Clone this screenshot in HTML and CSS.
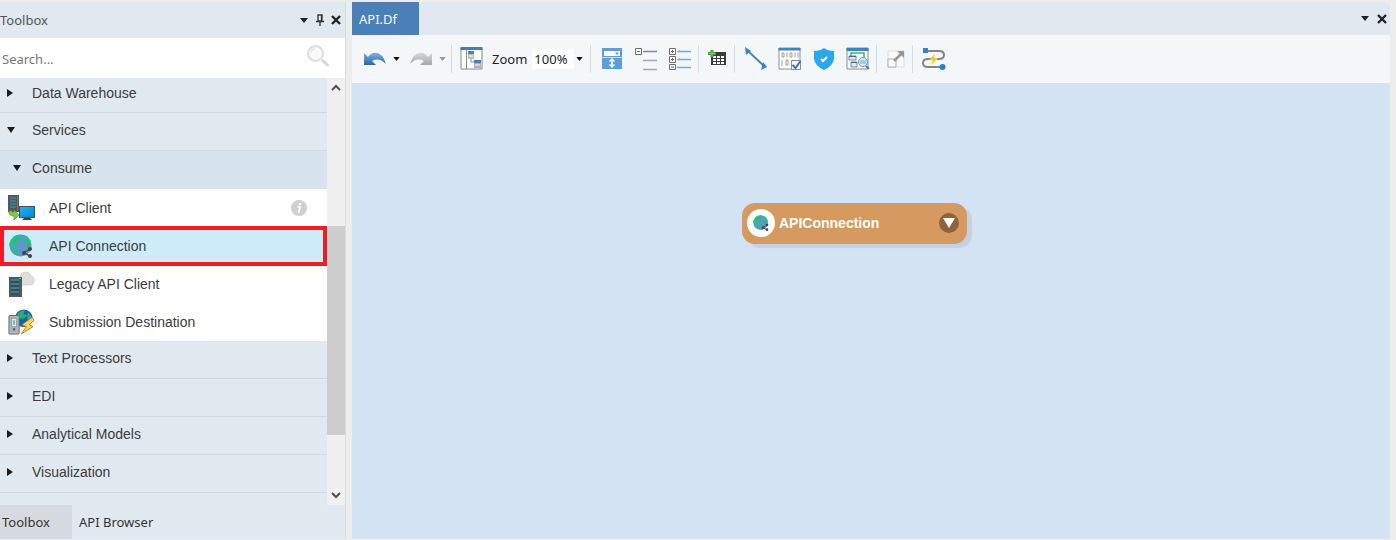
FILE: index.html
```html
<!DOCTYPE html>
<html lang="en">
<head>
<meta charset="utf-8">
<title>API.Df</title>
<link rel="stylesheet" href="styles.css">
</head>
<body>
<svg class="defs" aria-hidden="true">
  <defs>
    <linearGradient id="blueArrow" x1="0" y1="0" x2="0" y2="1"><stop offset="0" stop-color="#7fb0dc"/><stop offset="1" stop-color="#2565ae"/></linearGradient>
    <linearGradient id="greyArrow" x1="0" y1="0" x2="0" y2="1"><stop offset="0" stop-color="#d4d6d8"/><stop offset="1" stop-color="#a5a8ab"/></linearGradient>
    <linearGradient id="screen" x1="0" y1="0" x2="1" y2="1"><stop offset="0" stop-color="#19b4ee"/><stop offset="1" stop-color="#0b86d2"/></linearGradient>
  </defs>
  <symbol id="down" viewBox="0 0 8 5"><path d="M0 0h8L4 5z"/></symbol>
  <symbol id="cross" viewBox="0 0 10 10"><path d="M1 1l8 8M9 1l-8 8" fill="none" stroke="#222" stroke-width="2.4"/></symbol>
  <symbol id="globe" viewBox="0 0 24 24">
    <circle cx="11.500" cy="11.500" r="11" fill="#6097ca"/>
    <path d="M1 8C3 3 7 0 12 1l-2 3 2 1-2 3-3 1-2 3 3 2 1 3-1 4-3-2-1-5-4-3zM15 1l4 2 3 5-1 4-2-3-2 0-1-3 1-2z" fill="#1fc487"/>
    <path d="M4 6l4-3 1 2-4 3zM18 9l3 1-1 3-3-1z" fill="#45a877"/>
    <path d="M21 15l-6 4 6 3" fill="none" stroke="#555" stroke-width="1.500"/>
    <circle cx="21" cy="15" r="2" fill="#454545"/><circle cx="15" cy="19" r="2" fill="#454545"/><circle cx="21" cy="22" r="2" fill="#454545"/>
  </symbol>
</svg>

<div class="app">
  <aside class="panel">
    <header class="panel-head">
      <h2 class="panel-title">Toolbox</h2>
      <button class="plain" aria-label="Options"><svg class="caret" aria-hidden="true"><use href="#down"/></svg></button>
      <button class="plain" aria-label="Pin"><svg width="10" height="12" viewBox="0 0 10 12"><path d="M3 1h4v6H3zM1 7.500h8M5 8v4M6.500 1v6" fill="none" stroke="#333" stroke-width="1.300"/></svg></button>
      <button class="plain" aria-label="Close toolbox"><svg class="cross" aria-hidden="true"><use href="#cross"/></svg></button>
    </header>
    <div class="search">
      <input class="search-input" type="text" placeholder="Search..." aria-label="Search">
      <svg class="search-icon" viewBox="0 0 24 24" aria-hidden="true"><circle cx="9.500" cy="9.500" r="7.500" fill="#fafafa" stroke="#dedede" stroke-width="2"/><path d="M5 9q0-4 4-4" fill="none" stroke="#e8e8e8" stroke-width="1.500"/><path d="M15.500 15.500l2 2" stroke="#dedede" stroke-width="2"/><path d="M17 17l4.500 4" stroke="#d6d6d6" stroke-width="3" stroke-linecap="round"/></svg>
    </div>
    <div class="tree">
      <div class="tree-list">
        <button class="group first"><span class="mark right"></span>Data Warehouse</button>
        <button class="group"><span class="mark open"></span>Services</button>
        <button class="group sub"><span class="mark open deep"></span>Consume</button>
        <button class="item">
          <svg class="item-icon" viewBox="0 0 28 26" aria-hidden="true"><path d="M1 0h11v17H1z" fill="#53575b"/><path d="M3 3h6M3 6h6M3 9h6M3 12h6" stroke="#369ec5" stroke-width="1.200"/><path d="M10 1h1v15h-1z" fill="#777"/><path d="M12 11h16v12H12z" fill="#4a5259"/><path d="M13 12h14v10H13z" fill="url(#screen)"/><path d="M17 23h6l2 2H15z" fill="#374148"/><path d="M2 16q-1 5 5 5v4l5-5-5-5v3q-2 0-2-2z" fill="#83cc3a" stroke="#57982b" stroke-width=".7"/></svg>
          <span class="item-label">API Client</span>
          <svg class="info" viewBox="0 0 16 16" aria-hidden="true"><circle cx="8" cy="8" r="8" fill="#d0d0d0"/><circle cx="9" cy="4" r="1.300" fill="#fff"/><path d="M6.500 7H9l-1.200 5h1" fill="none" stroke="#fff" stroke-width="1.600"/></svg>
        </button>
        <button class="item selected">
          <svg class="item-icon" viewBox="-2 -1 28 26" aria-hidden="true"><use href="#globe" width="24" height="24"/></svg>
          <span class="item-label">API Connection</span>
        </button>
        <button class="item">
          <svg class="item-icon" viewBox="0 0 28 26" aria-hidden="true"><path d="M11 14q-2-4 2-6 0-7 6-7 4 0 5 4 4 1 3 6-1 3-4 3z" fill="#dedede" stroke="#c8c8c8" stroke-width=".7"/><path d="M2 6h13v20H2z" fill="#4d5960"/><path d="M4 9h8M4 13h8M4 17h8M4 21h8" stroke="#358ca8" stroke-width="1.500"/><path d="M4 11h8M4 15h8M4 19h8M4 23h8" stroke="#2f3b42"/><path d="M12 7h2v1h-2z" fill="#7ed321"/></svg>
          <span class="item-label">Legacy API Client</span>
        </button>
        <button class="item">
          <svg class="item-icon" viewBox="0 0 28 28" aria-hidden="true"><circle cx="17" cy="10" r="9.500" fill="#1662a9"/><path d="M10 5q4-4 8-4l-1 4 4 2-3 3-4 1-3-2z" fill="#27ad78"/><path d="M21 3l4 5-1 6-3-2z" fill="#35b27b"/><rect x="1" y="7" width="11" height="20" rx="1" fill="#aeb6bc" stroke="#626a70"/><path d="M4 10h5v9H4z" fill="#eef2f5" stroke="#727c83" stroke-width=".7"/><path d="M6.500 12v5" stroke="#23a0ce" stroke-width="1.500"/><circle cx="6.500" cy="22" r="1.500" fill="#626a70"/><path d="M26 9l-11 8 5 2-6 8 13-8-4-2 5-5z" fill="#ffd85a" stroke="#bd7819"/></svg>
          <span class="item-label">Submission Destination</span>
        </button>
        <button class="group"><span class="mark right"></span>Text Processors</button>
        <button class="group"><span class="mark right"></span>EDI</button>
        <button class="group"><span class="mark right"></span>Analytical Models</button>
        <button class="group"><span class="mark right"></span>Visualization</button>
      </div>
      <div class="scroll">
        <button class="scroll-btn" aria-label="Scroll up"><svg width="10" height="8" viewBox="0 0 10 8"><path d="M1 6l4-4 4 4" fill="none" stroke="#505050" stroke-width="2"/></svg></button>
        <div class="track"><div class="thumb"></div></div>
        <button class="scroll-btn" aria-label="Scroll down"><svg width="10" height="8" viewBox="0 0 10 8"><path d="M1 2l4 4 4-4" fill="none" stroke="#505050" stroke-width="2"/></svg></button>
      </div>
    </div>
    <nav class="panel-tabs">
      <button class="panel-tab active">Toolbox</button>
      <button class="panel-tab">API Browser</button>
    </nav>
  </aside>

  <main class="document">
    <header class="doc-tabs">
      <button class="doc-tab">API.Df</button>
      <span class="spacer"></span>
      <button class="plain" aria-label="Document list"><svg class="caret" aria-hidden="true"><use href="#down"/></svg></button>
      <button class="plain" aria-label="Close document"><svg class="cross" aria-hidden="true"><use href="#cross"/></svg></button>
    </header>
    <div class="toolbar">
      <button class="tool" aria-label="Undo"><svg viewBox="0 0 24 24"><path d="M1 6v12h12l-4-4q7-4 14 3Q19 4 10 6 7 7 5 10z" fill="url(#blueArrow)"/></svg></button>
      <button class="drop" aria-label="Undo history"><svg class="small-caret"><use href="#down"/></svg></button>
      <button class="tool redo" aria-label="Redo"><svg viewBox="0 0 24 24"><path d="M23 6v12H11l4-4q-7-4-14 3Q5 4 14 6q3 1 5 4z" fill="url(#greyArrow)"/></svg></button>
      <button class="drop muted" aria-label="Redo history"><svg class="small-caret"><use href="#down"/></svg></button>
      <span class="sep short"></span>
      <button class="tool" aria-label="Overview"><svg viewBox="0 0 24 24"><path d="M1 1h21v21H1z" fill="#fff" stroke="#858b90"/><path d="M.5 0h22v3H.5z" fill="#3f7ec0"/><path d="M6.500 3v19" stroke="#858b90"/><path d="M8 4h6v8H8z" fill="#b8bec5"/><path d="M8 4h6v3H8zM14 13h7v3h-7z" fill="#4381c1"/><path d="M14 16h7v5h-7z" fill="#abb2b9"/><path d="M9 9h4M15 18h5" stroke="#fff"/><path d="M11 12v3h3" fill="none" stroke="#8a9095"/></svg></button>
      <label class="zoom-label" for="zoom">Zoom</label>
      <select class="zoom-select" id="zoom"><option>100%</option></select>
      <svg class="small-caret zoom-caret" aria-hidden="true"><use href="#down"/></svg>
      <span class="sep"></span>
      <div class="tools">
        <button class="tool" aria-label="Expand objects"><svg viewBox="0 0 24 24"><path d="M2 1h20v21H2z" fill="#5e9dd5"/><path d="M4 4h16v5H4z" fill="#fff"/><path d="M15 5.500h4L17 8z" fill="#5e9dd5"/><path d="M2 10.500h20" stroke="#c8e0f5"/><path d="M12 12v8M9.500 14.500L12 12l2.500 2.500M9.500 17.500L12 20l2.500-2.500" fill="none" stroke="#fff" stroke-width="1.500"/></svg></button>
        <button class="tool" aria-label="Collapse nodes"><svg viewBox="0 0 24 24"><path d="M1.500 1.500h6v6h-6zM3 4.500h3" fill="#fff" stroke="#6d6d6d"/><path d="M9 4.500h14" stroke="#5796d4" stroke-width="1.500"/><path d="M9 13.500h14M9 22.500h14" stroke="#a7aaad" stroke-width="1.300"/></svg></button>
        <button class="tool" aria-label="Expand nodes"><svg viewBox="0 0 24 24"><path d="M1.500 1.500h6v6h-6zM1.500 9.500h6v6h-6zM1.500 17.500h6v5h-6zM3 4.500h3M4.500 3v3M3 12.500h3M4.500 11v3M3 20h3" fill="#fff" stroke="#6d6d6d"/><path d="M9 4.500h14M9 12.500h14M9 20.500h14" stroke="#76a9d9" stroke-width="1.500"/></svg></button>
      </div>
      <span class="sep"></span>
      <button class="tool narrow" aria-label="Add grid"><svg viewBox="0 0 20 24"><path d="M3 5h15v13H3z" fill="#3c3c3c"/><path d="M5 9h3v2H5zM9 9h3v2H9zM13 9h3v2h-3zM5 12h3v2H5zM9 12h3v2H9zM13 12h3v2h-3zM5 15h3v2H5zM9 15h3v2H9zM13 15h3v2h-3z" fill="#fff"/><path d="M4 3v7M0 6.500h8" stroke="#459b38" stroke-width="3"/><path d="M4 4v5M1 6.500h6" stroke="#82cf68"/></svg></button>
      <span class="sep"></span>
      <div class="tools">
        <button class="tool" aria-label="Link"><svg viewBox="0 0 24 24"><path d="M4 4l16 15" stroke="#457db5" stroke-width="1.800"/><path d="M1 0l6 4-5 4zM23 20l-6 3 2-8z" fill="#3f80c4"/></svg></button>
        <button class="tool" aria-label="Verify data"><svg viewBox="0 0 24 24"><path d="M1 1h21v21H1z" fill="#fff" stroke="#8b8e91"/><path d="M.5 1h22v2.500H.5z" fill="#4380c0"/><path d="M4 6h2v4H4zM12 6h2v4h-2z" fill="none" stroke="#9b9b9b"/><path d="M9 5.500v5M17 5.500v5M20 5.500v5M4 13v6M8 13h2v5H8z" fill="none" stroke="#9b9b9b"/><path d="M13.500 13.500h9v9h-9z" fill="#f4f7fa" stroke="#8b8e91"/><path d="M14.500 18l3 3 5-7" fill="none" stroke="#3877bb" stroke-width="2"/></svg></button>
        <button class="tool" aria-label="Data protection"><svg viewBox="0 0 24 24"><path d="M12 1q4 3 10 3v8q-1 7-10 11Q3 19 2 12V4q6 0 10-3z" fill="#2aa8ed"/><path d="M9 12l2 2 4-4" fill="none" stroke="#fff" stroke-width="2"/></svg></button>
        <button class="tool" aria-label="Preview"><svg viewBox="0 0 24 24"><path d="M1 1h21v21H1z" fill="#f9fafb" stroke="#8b8e91"/><path d="M.5 1h22v3H.5z" fill="#4380c0"/><path d="M5 9V6h13v4" fill="none" stroke="#43b64f" stroke-width="1.500"/><path d="M3 9h7v4H3zM5 15h6v5H5z" fill="#e5e9ed" stroke="#808990"/><path d="M3 9h7v1H3zM5 15h6v1H5z" fill="#356da5"/><circle cx="17" cy="15" r="4.500" fill="#d8eafa" stroke="#6b9bc9"/><path d="M14 14h6M14 16h6" stroke="#77a6d2"/><path d="M20 19l3 3" stroke="#777" stroke-width="2"/></svg></button>
      </div>
      <span class="sep"></span>
      <button class="tool narrow" aria-label="Resize"><svg viewBox="0 0 20 24"><path d="M2 4h16v16H2z" fill="#fafafa" stroke="#ddd"/><path d="M2 12h8v8H2z" fill="#fff" stroke="#aaa"/><path d="M8 14l7-7" stroke="#969696" stroke-width="2.500"/><path d="M11 4h7v7z" fill="#969696"/></svg></button>
      <span class="sep"></span>
      <button class="tool" aria-label="Route"><svg viewBox="0 0 24 24"><path d="M5 4h12q5 0 5 4t-5 4h-2M9 12H6q-5 0-5 4t5 4h14" fill="none" stroke="#858585" stroke-width="2"/><path d="M1 1h5v5H1z" fill="#3a7fd0"/><circle cx="20.500" cy="20" r="3" fill="#287ed1"/><path d="M13 7l-6 6h4l-2 5 7-7h-4z" fill="#ffc229"/></svg></button>
    </div>
    <section class="canvas" aria-label="Dataflow canvas">
      <div class="node">
        <span class="node-badge"><svg width="16" height="16" aria-hidden="true"><use href="#globe"/></svg></span>
        <span class="node-name">APIConnection</span>
        <button class="node-toggle" aria-label="Expand APIConnection"><svg width="12" height="10" viewBox="0 0 12 10"><path d="M0 0h12L6 10z" fill="#fff"/></svg></button>
      </div>
    </section>
  </main>
</div>
</body>
</html>
```
FILE: styles.css
```css
* { box-sizing: border-box; }
body {
  margin: 0;
  height: 100vh;
  background: #ededee;
  color: #333;
  font: 13px/20px "Noto Sans", "Open Sans", sans-serif;
}
button, input, select { font: inherit; color: inherit; }
button { display: flex; align-items: center; border: 0; padding: 0; background: none; }
svg { display: block; flex: none; }
.defs { position: absolute; width: 0; height: 0; }
.app { display: flex; gap: 6px; height: 100%; padding: 2px 6px 1px 0; }
.panel {
  display: flex;
  flex-direction: column;
  flex: 0 0 346px;
  background: #e1e9f0;
  border-right: 1px solid #d9dcdf;
}
.panel-head { display: flex; align-items: center; gap: 6px; height: 36px; padding-right: 4px; }
.panel-title { flex: 1; margin: 0; font-size: 13px; font-weight: 400; color: #555; }
.plain { justify-content: center; min-width: 10px; height: 20px; }
.caret { width: 8px; height: 5px; fill: #222; }
.cross { width: 10px; height: 10px; }
.search { display: flex; align-items: center; height: 40px; padding: 0 15px 4px 0; background: #fff; }
.search-input { flex: 1; min-width: 0; border: 0; padding: 6px 2px 0; background: none; outline: 0; }
.search-input::placeholder { color: #777; opacity: 1; }
.search-icon { width: 24px; height: 24px; }
.tree { display: flex; flex: 1; min-height: 0; }
.tree-list {
  display: flex;
  flex-direction: column;
  flex: 1;
  min-width: 0;
  font-family: "Liberation Sans", Arial, sans-serif;
  font-size: 14px;
  color: #3c3c3c;
}
.group { flex: none; height: 38px; padding: 0 0 3px 7px; border-bottom: 1px solid #d0d8e0; }
.group.first { height: 35px; padding-bottom: 4px; }
.group.sub { background: #d8e4ed; border-bottom-color: #d8e4ed; }
.mark { width: 25px; }
.mark::before { content: ""; display: block; width: 6px; height: 8px; background: #1c1c1c; clip-path: polygon(0 0, 100% 50%, 0 100%); }
.mark.open::before { width: 8px; height: 6px; clip-path: polygon(0 0, 100% 0, 50% 100%); }
.mark.deep { padding-left: 6px; }
.item { flex: none; gap: 14px; height: 38px; padding: 0 20px 1px 7px; background: #fff; text-align: left; }
.item-icon { width: 28px; height: 26px; }
.item-label { flex: 1; }
.info { width: 16px; height: 16px; }
.selected { position: relative; background: #ceecf9; }
.selected::after { content: ""; position: absolute; inset: -1px 0 -1px 0; border: 4px solid #ee1c24; }
.scroll { display: flex; flex-direction: column; flex: 0 0 18px; background: #f0f0f0; }
.scroll-btn { justify-content: center; height: 20px; }
.track { display: grid; grid-template-rows: 33fr 54fr 13fr; flex: 1; }
.thumb { grid-row: 2; background: #cdcdcd; }
.panel-tabs { display: flex; height: 34px; }
.panel-tab { padding: 0 7px; }
.panel-tab.active { width: 72px; padding-left: 2px; background: #d5dbe1; }
.document { display: flex; flex-direction: column; flex: 1; min-width: 0; }
.doc-tabs { display: flex; align-items: center; gap: 7px; height: 33px; padding-right: 3px; background: #e1e9f0; }
.doc-tab { align-self: stretch; width: 67px; padding-left: 7px; background: #4a80b8; color: #f4f8fc; }
.spacer { flex: 1; }
.toolbar { display: flex; align-items: center; height: 48px; padding-left: 11px; background: #f4f7fa; color: #222; }
.tool { flex: none; width: 24px; height: 24px; }
.tool svg { width: 100%; height: 24px; }
.tool.narrow { width: 20px; }
.redo { margin-left: 4px; }
.drop { justify-content: center; width: 18px; height: 24px; }
.small-caret { width: 7px; height: 4px; fill: #111; }
.muted .small-caret { fill: #999; }
.sep { flex: none; width: 1px; height: 28px; margin: 0 9px 0 6px; background: #d7dce2; }
.sep.short { margin: 0 8px 0 0; }
.tools { display: flex; gap: 10px; }
.zoom-label { margin-left: 8px; }
.zoom-select { width: 42px; height: 20px; margin-left: 5px; padding: 0 0 0 2px; border: 0; background: #fff; appearance: none; }
.zoom-caret { margin: 0 1px 0 2px; }
.canvas { position: relative; flex: 1; min-height: 0; background: #d4e3f3; border: solid #dfe3e8; border-width: 0 1px 1px 0; }
.node {
  position: absolute;
  left: 390px;
  top: 120px;
  display: flex;
  align-items: center;
  width: 225px;
  height: 41px;
  padding: 0 8px 1px 5px;
  border-radius: 13px;
  background: #d69960;
  box-shadow: 5px 4px 1px #c3d2e1;
  color: #fff;
  font: bold 14px/20px "Liberation Sans", Arial, sans-serif;
}
.node-badge { display: grid; place-items: center; width: 28px; height: 28px; border-radius: 50%; background: #fff; }
.node-name { flex: 1; padding-left: 4px; }
.node-toggle { justify-content: center; width: 20px; height: 20px; border-radius: 50%; background: #8c633e; }
```
